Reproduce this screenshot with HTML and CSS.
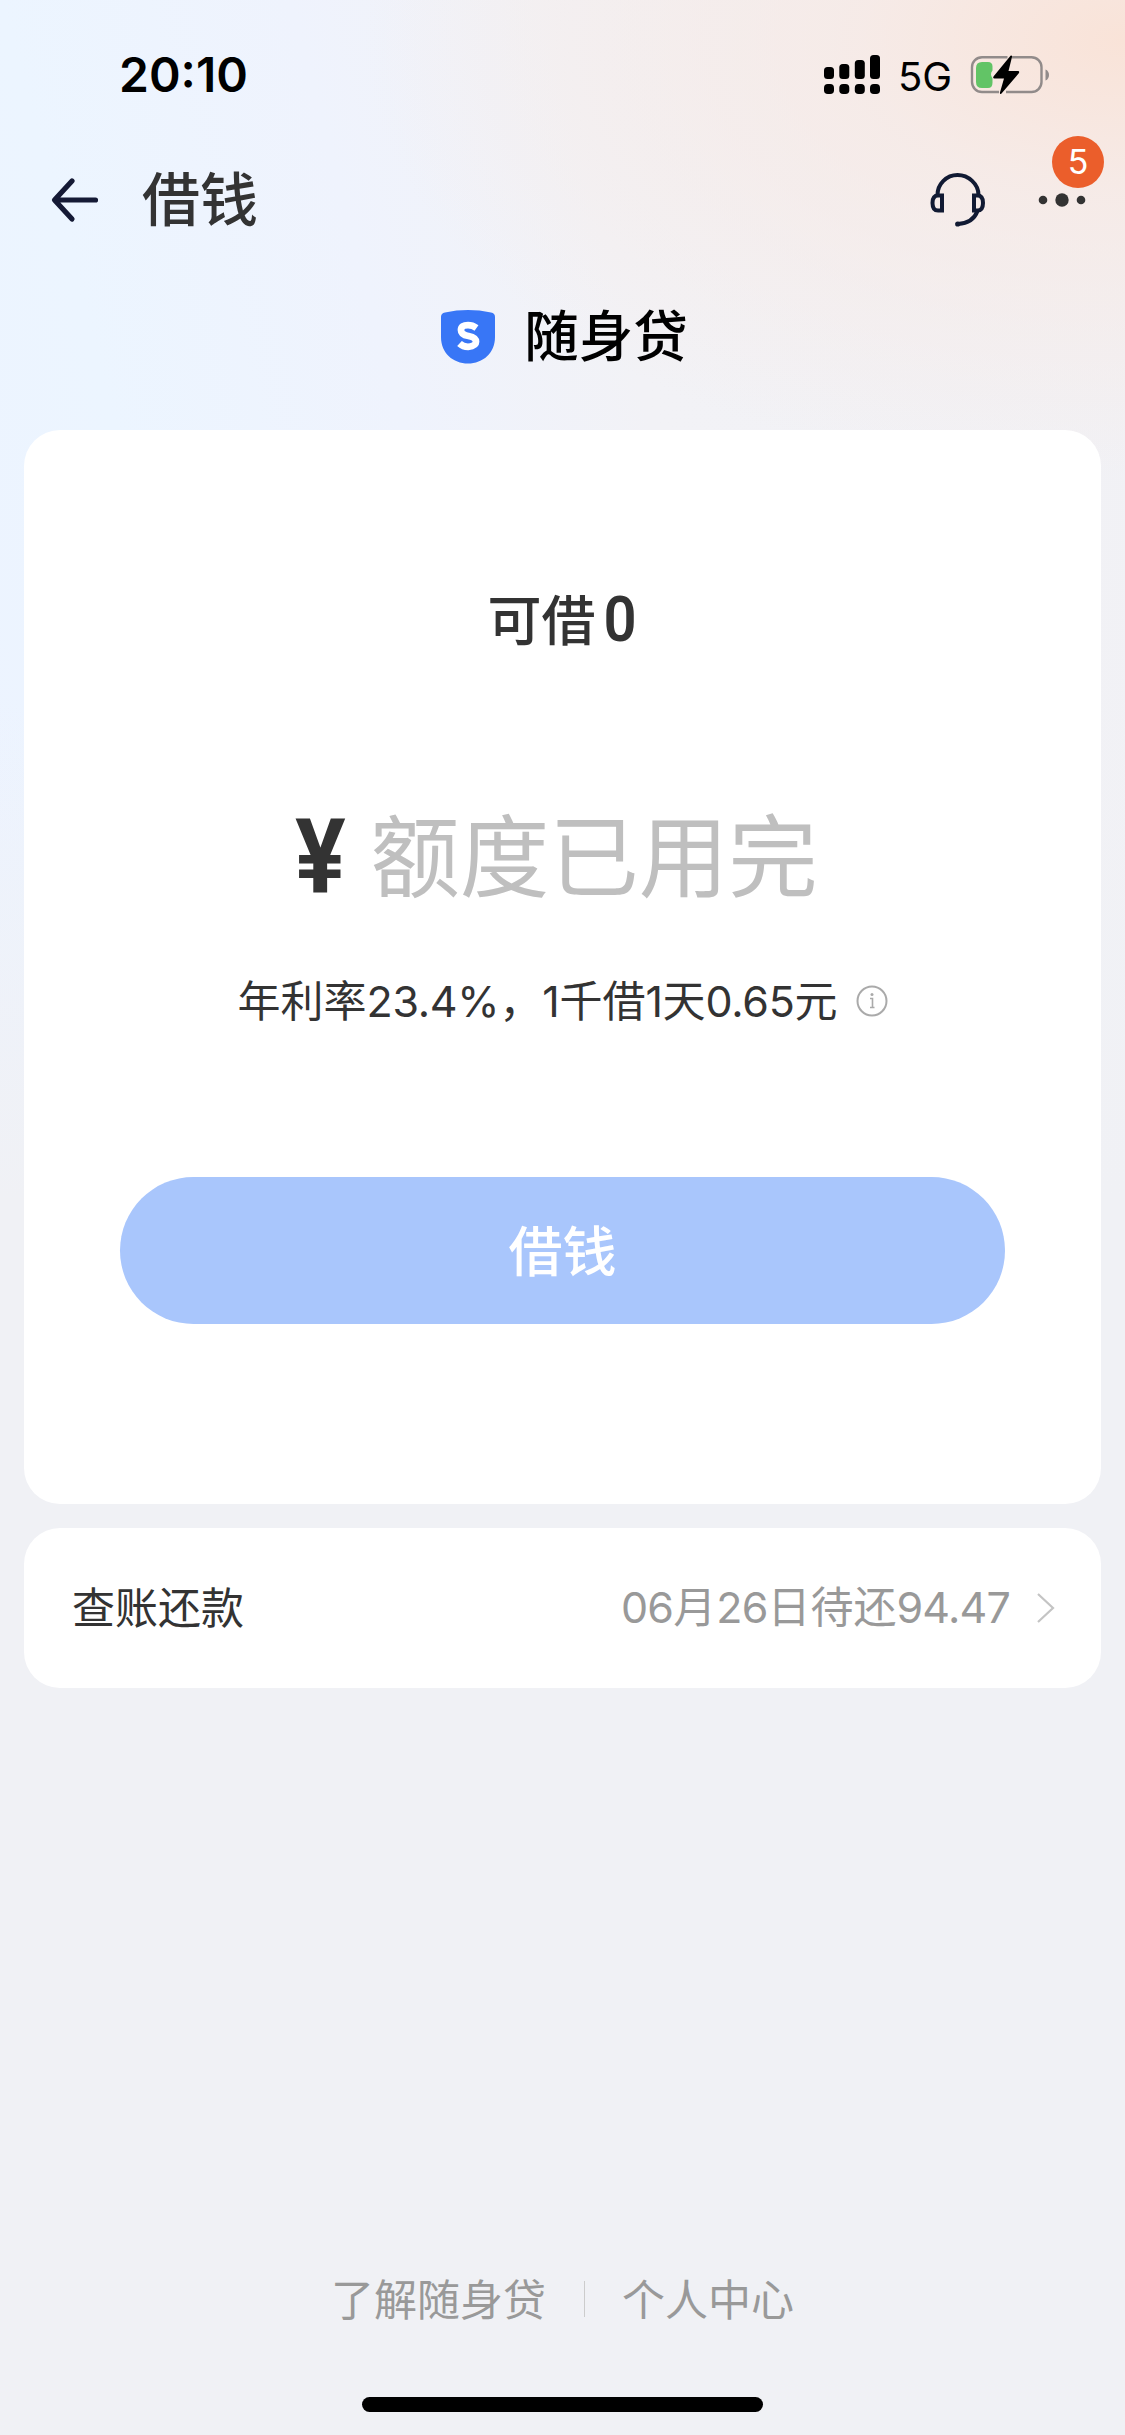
FILE: index.html
```html
<!DOCTYPE html>
<html lang="zh-CN">
<head>
<meta charset="utf-8">
<title>借钱</title>
<link rel="stylesheet" href="styles.css">
</head>
<body>
<div class="page">
  <div class="statusbar">
    <span class="time">20:10</span>
    <div class="status-right">
      <svg class="signal" width="56" height="40" viewBox="0 0 56 40">
        <rect x="0" y="12" width="10" height="12" rx="3.5"/><rect x="15.3" y="9" width="10" height="15" rx="3.5"/><rect x="30.8" y="5" width="10" height="19" rx="3.5"/><rect x="46" y="0" width="10" height="24" rx="3.5"/>
        <rect x="0" y="29" width="10" height="10" rx="3.8"/><rect x="15.3" y="29" width="10" height="10" rx="3.8"/><rect x="30.8" y="29" width="10" height="10" rx="3.8"/><rect x="46" y="29" width="10" height="10" rx="3.8"/>
      </svg>
      <span class="network">5G</span>
      <svg class="battery" width="80" height="42" viewBox="0 0 80 42">
        <path d="M37.500 2.200H12A10 10 0 0 0 2 12.200V27A10 10 0 0 0 12 37H29M42 2.200H61.500A10 10 0 0 1 71.500 12.200V27A10 10 0 0 1 61.500 37H36" fill="none" stroke="#918b8a" stroke-width="2.400"/>
        <path d="M75.500 14.500C80.200 16 80.200 24 75.500 25.500Z" fill="#918b8a"/>
        <path d="M12 7h6q4.500 0 4.500 4.500v4q-3 3.500 0 8v4q0 5.500-4.500 5.500h-6q-6 0-6-6v-14q0-6 6-6z" fill="#62c466"/>
        <path d="M40.500.7q1.800-.7 1.500 1.300L38.500 16H48q2 .3.800 2.200L31.500 38.500q-1.600 1.500-1.600-.8L34 23.500H24.500q-2.200-.3-.8-2.200z" fill="#000"/>
      </svg>
    </div>
  </div>
  <header class="navbar">
    <svg class="back" width="48" height="44" viewBox="0 0 48 44"><path d="M21 3L3.500 22L21 41M4 22H44.500" fill="none" stroke="#151a35" stroke-width="5.200" stroke-linecap="round" stroke-linejoin="round"/></svg>
    <h1 class="title">借钱</h1>
    <svg class="headset" width="56" height="54" viewBox="0 0 56 54" fill="none" stroke="#111a33" stroke-width="4"><path d="M7.500 22C7.500 11 16.500 2 27.500 2S48.500 11 48.500 22"/><path d="M12 22.500H8Q2.500 22.500 2.500 30T8 37.500H12ZM44 22.500H47.500Q53 22.500 53 30T47.500 37.500H44Z"/><path d="M47.500 38Q43 50 28 51"/><circle cx="27.700" cy="51" r="2.600" fill="#111a33" stroke="none"/></svg>
    <div class="more">
      <svg width="48" height="14" viewBox="0 0 48 14" fill="#333"><circle cx="5" cy="7" r="4.300"/><circle cx="24" cy="7" r="6.700"/><circle cx="43" cy="7" r="4.300"/></svg>
      <span class="badge">5</span>
    </div>
  </header>
  <div class="brand">
    <svg class="shield" width="54" height="54" viewBox="0 0 54 54"><path d="M0 7Q0 3.300 4 2.500Q27-2.300 50 2.500Q54 3.300 54 7V27C54 43 42 53.500 27 53.500S0 43 0 27Z" fill="#3876f6"/><path d="M35.500 18Q31.500 15.200 27 15.200Q20 15.200 20 20T27.500 26Q35 27.500 35 31.700T27 36.800Q22 36.800 18.500 33.500" fill="none" stroke="#fff" stroke-width="6.800"/></svg>
    <span class="brand-name">随身贷</span>
  </div>
  <main class="cards">
    <section class="card loan">
      <div class="available">可借<span class="zero">0</span></div>
      <div class="amount"><span class="yen">¥</span><span class="hint">额度已用完</span></div>
      <div class="rate"><span class="rate-text">年利率<span class="num">23.4%</span>，<span class="num">1</span>千借<span class="num">1</span>天<span class="num">0.65</span>元</span>
        <svg width="32" height="32" viewBox="0 0 32 32"><circle cx="16" cy="16" r="14.500" fill="none" stroke="#aaa" stroke-width="2"/><path d="M14 13.500H16.500V22M14 22.500H18.500" fill="none" stroke="#aaa" stroke-width="1.600"/><circle cx="16" cy="9.500" r="1.500" fill="#aaa"/></svg>
      </div>
      <button class="borrow">借钱</button>
    </section>
    <section class="card bill">
      <span class="bill-label">查账还款</span>
      <span class="due"><span class="num">06</span>月<span class="num">26</span>日待还<span class="num">94.47</span></span>
      <svg width="20" height="32" viewBox="0 0 20 32"><path d="M2 2L17 16L2 30" fill="none" stroke="#c4c4c4" stroke-width="2.200"/></svg>
    </section>
  </main>
  <footer class="footer"><span>了解随身贷</span><i class="divider"></i><span>个人中心</span></footer>
  <div class="home"></div>
</div>
</body>
</html>
```
FILE: styles.css
```css
* { box-sizing: border-box; }
body { margin: 0; font-family: "Noto Sans CJK SC", sans-serif; color: #333; }
svg { display: block; flex: none; overflow: visible; }
.page {
  width: 1125px; height: 2435px; display: flex; flex-direction: column; overflow: hidden;
  background:
    linear-gradient(180deg, rgba(240,241,245,0) 700px, #f0f1f5 1200px) 0 0 / 1125px 1201px no-repeat,
    radial-gradient(ellipse 760px 440px at 1125px 40px, #f9e3d8 0%, rgba(247,233,228,.8) 35%, rgba(243,240,243,0) 100%),
    linear-gradient(75deg, #edf3ff 0, #ecf5ff 310px, #eff3fd 590px, #f2f2f6 830px, #f1f1f5 100%) 0 0 / 1125px 1200px no-repeat,
    #f0f1f5;
}
.statusbar { height: 150px; padding: 0 75px 0 119px; display: flex; justify-content: space-between; font-family: Inter, sans-serif; color: #000; }
.time { font-size: 48px; font-weight: 600; line-height: 60px; margin-top: 45px; }
.status-right { display: flex; margin-top: 55px; }
.network { font-size: 40px; line-height: 43px; margin-left: 18px; width: 54px; }
.battery { margin-left: 18px; }
.navbar { height: 100px; padding: 0 34px 0 51px; display: flex; align-items: center; }
.title { margin: -9px auto 0 43px; font-size: 58px; font-weight: 500; line-height: 80px; }
.headset { margin-right: 52px; }
.more { position: relative; width: 53px; }
.badge { position: absolute; left: 14px; top: -57px; width: 52px; height: 52px; border-radius: 50%; background: #eb5e2b; color: #fff; font: 34px/52px Inter, sans-serif; text-align: center; }
.brand { height: 180px; padding: 60px 0 0 4px; display: flex; justify-content: center; gap: 29px; }
.brand-name { font-size: 54.500px; font-weight: 500; line-height: 54px; color: #000; margin-top: -4px; }
.cards { display: flex; flex-direction: column; gap: 24px; padding: 0 24px; }
.card { background: #fff; border-radius: 36px; }
.loan { height: 1074px; padding: 148px 96px 0; display: flex; flex-direction: column; }
.available { font-size: 54px; font-weight: 500; line-height: 80px; text-align: center; }
.zero { display: inline-block; font-family: Roboto, sans-serif; font-size: 63px; font-weight: 600; margin-left: 6px; transform: scaleX(.92); }
.amount { display: flex; justify-content: center; height: 130px; margin: 129px 16px 0 0; line-height: 124px; }
.yen { width: 52px; font-family: Roboto, sans-serif; font-size: 104px; font-weight: 700; line-height: 136px; transform: translateX(4px) scaleX(.91); transform-origin: 0 0; }
.hint { font-size: 89.500px; color: #bfbfbf; margin-left: 27px; }
.rate { display: flex; align-items: center; justify-content: center; gap: 18px; height: 60px; margin-top: 52px; font-size: 43px; line-height: 60px; }
.rate-text { margin-top: -4px; }
.rate .num { letter-spacing: -.3px; }
.num { font-family: Inter, sans-serif; letter-spacing: -.800px; }
.borrow { height: 147px; margin-top: 146px; border: 0; border-radius: 74px; background: #a9c6fc; color: #fff; font: 500 54px/140px "Noto Sans CJK SC", sans-serif; padding: 0 0 4px; }
.bill { height: 160px; padding: 0 45px 0 48px; display: flex; align-items: center; font-size: 43px; line-height: 60px; }
.bill-label { margin-top: -6px; }
.due { margin: -5px 26px 0 auto; color: #999; }
.footer { margin-top: 563px; padding-bottom: 4px; display: flex; justify-content: center; align-items: center; height: 96px; font-size: 43px; color: #999; line-height: 60px; }
.divider { width: 1px; height: 36px; background: #ccc; margin: 3px 37px 0 38px; }
.home { width: 401px; height: 15px; margin: 50px auto 0; border-radius: 8px; background: #000; }
```
